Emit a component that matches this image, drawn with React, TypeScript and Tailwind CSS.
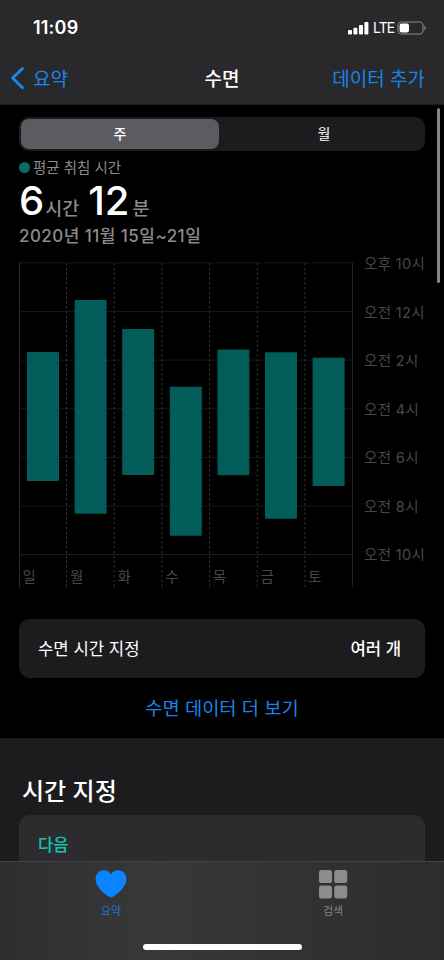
import React from "react";

const days = [
  { label: "일", top: 352, bottom: 481 },
  { label: "월", top: 300, bottom: 513.7 },
  { label: "화", top: 329, bottom: 475 },
  { label: "수", top: 386.8, bottom: 535.8 },
  { label: "목", top: 349.5, bottom: 475.3 },
  { label: "금", top: 352.3, bottom: 518.8 },
  { label: "토", top: 357.8, bottom: 486 },
];

const hours = ["오후 10시", "오전 12시", "오전 2시", "오전 4시", "오전 6시", "오전 8시", "오전 10시"];

const STEP = 47.6;
const CHART_TOP = 255;

function StatusBar() {
  return (
    <div className="flex h-[54px] items-start justify-between pl-[33px] pr-[17px] pt-[16px]">
      <span className="text-[18px] font-semibold leading-[24px] tracking-[0.2px]">11:09</span>
      <div className="flex h-[24px] items-center">
        <svg className="shrink-0" width="21" height="14" viewBox="0 0 21 14" fill="#fff">
          <rect x="0" y="9" width="4" height="4.6" rx="1" />
          <rect x="5.4" y="6.8" width="4" height="6.8" rx="1" />
          <rect x="11" y="4" width="4" height="9.6" rx="1" />
          <rect x="16.4" y="1" width="4" height="12.6" rx="1" />
        </svg>
        <span className="ml-[4px] w-[24px] text-[14px] font-normal leading-[24px] tracking-[-0.9px]">LTE</span>
        <svg className="shrink-0" width="30" height="14" viewBox="0 0 30 14">
          <rect x="1" y="1" width="25" height="12" rx="3.6" fill="none" stroke="#8b8b8d" strokeWidth="1.1" />
          <rect x="2.6" y="2.6" width="9.4" height="8.8" rx="1.8" fill="#fff" />
          <path d="M27.3 4.8 C29.2 5.6 29.2 8.4 27.3 9.2 Z" fill="#8b8b8d" />
        </svg>
      </div>
    </div>
  );
}

function NavBar() {
  return (
    <div className="grid h-[50px] grid-cols-3 items-start text-[19px] leading-[28px]">
      <div className="flex items-start pl-[10px] pt-[12px] text-[#1a84e8]">
        <svg className="shrink-0" width="15" height="24" viewBox="0 0 15 24" fill="none" stroke="#1a84e8" strokeWidth="3" strokeLinecap="round" strokeLinejoin="round">
          <path d="M12.4 2.6 L2.6 12 L12.4 21.6" />
        </svg>
        <span className="ml-[8px]">요약</span>
      </div>
      <div className="pt-[12px] text-center font-medium">수면</div>
      <div className="whitespace-nowrap pr-[19px] pt-[12px] text-right text-[#1a84e8]">데이터 추가</div>
    </div>
  );
}

function SleepChart() {
  const lines = [0, 1, 2, 3, 4, 5, 6];
  return (
    <div className="flex h-[340px] w-[425px]">
      <svg className="shrink-0" width="334" height="340" viewBox={`19 ${CHART_TOP} 334 340`}>
        {lines.map((i) => (
          <line key={i} x1="19.5" x2="352.5" y1={262.8 + i * 48.65} y2={262.8 + i * 48.65} stroke={i === 6 ? "#222223" : "#171718"} />
        ))}
        <line x1="19.5" x2="19.5" y1="262.5" y2="587" stroke="#2b2b2c" />
        <line x1="352.5" x2="352.5" y1="262.5" y2="587" stroke="#232324" />
        {days.slice(1).map((d, i) => (
          <line key={d.label} x1={66.5 + i * 47.7} x2={66.5 + i * 47.7} y1="263" y2="587" stroke="#363637" strokeDasharray="2.4 2.4" />
        ))}
        {days.map((d, i) => (
          <g key={d.label}>
            <rect x={27 + i * STEP} y={d.top} width="32" height={d.bottom - d.top} rx="0.8" fill="#025c59" />
            <text x={22.4 + i * STEP} y="582.3" fontSize="14.5" fill="#48484a">
              {d.label}
            </text>
          </g>
        ))}
      </svg>
      <div className="flex flex-col pl-[11px] text-[14.5px] tracking-[0.35px] text-[#48484a]">
        {hours.map((h) => (
          <span key={h} className="h-[48.65px] whitespace-nowrap leading-[17px]">
            {h}
          </span>
        ))}
      </div>
    </div>
  );
}

function TabBar() {
  return (
    <div className="flex h-[99px] flex-col border-t border-[#434345] bg-linear-to-r from-[#2e2e2f] via-[#38383a] via-35% to-[#2c2c2d]">
      <div className="grid grid-cols-2">
        <div className="flex flex-col items-center text-[#1a78d8]">
          <svg className="mt-[8px]" width="32" height="29" viewBox="0 0 32 29" fill="#0a84ff">
            <path d="M16 4.3 C14.3 1.6 11.8 0.2 8.9 0.2 C4.1 0.2 0.6 3.9 0.6 9.1 C0.6 16 6.6 22 13.2 26.3 C14.4 27 15.3 27.5 16 27.5 C16.7 27.5 17.6 27 18.8 26.3 C25.4 22 31.4 16 31.4 9.1 C31.4 3.9 27.9 0.2 23.1 0.2 C20.2 0.2 17.7 1.6 16 4.3 Z" />
          </svg>
          <span className="mt-[4px] text-[11px] leading-[16px]">요약</span>
        </div>
        <div className="flex flex-col items-center text-[#858587]">
          <svg className="mt-[8px]" width="30" height="29" viewBox="0 0 30 29" fill="#8c8c8e">
            <rect x="1" y="0" width="13" height="13" rx="2.6" />
            <rect x="16.2" y="0" width="13" height="13" rx="2.6" />
            <rect x="1" y="15.4" width="13" height="13" rx="2.6" />
            <rect x="16.2" y="15.4" width="13" height="13" rx="2.6" />
          </svg>
          <span className="mt-[4px] text-[11px] leading-[16px]">검색</span>
        </div>
      </div>
      <div className="mx-auto mt-[25px] h-[6px] w-[159px] rounded-full bg-white" />
    </div>
  );
}

export default function App() {
  return (
    <div className="relative flex h-[960px] w-[444px] flex-col overflow-hidden bg-black font-['Inter','Noto_Sans_CJK_KR',sans-serif] text-white">
      <header className="h-[105px] shrink-0 border-b border-[#1c1c1d] bg-[#29292b]">
        <StatusBar />
        <NavBar />
      </header>

      <section className="h-[633px] shrink-0 px-[19px] pt-[12px]">
        <div className="grid h-[34px] w-[406px] grid-cols-2 rounded-[10px] bg-[#1c1c1f] p-[2px] text-center text-[14px] leading-[30px]">
          <div className="mr-[3px] rounded-[8px] bg-[#5d5b61] font-medium">주</div>
          <div className="pl-[3px]">월</div>
        </div>
        <div className="mt-[6px] flex h-[20px] items-center text-[14.5px] text-[#8b8b8d]">
          <span className="h-[11px] w-[11px] rounded-full bg-[#0b6b67]" />
          <span className="ml-[3px] pt-px leading-[20px]">평균 취침 시간</span>
        </div>
        <div className="flex h-[46px] items-baseline whitespace-nowrap text-[18.5px] font-medium leading-[48px] text-[#8b8b8d]">
          <span className="text-[40px] text-white">6</span>
          <span className="ml-[1px]">시간</span>
          <span className="ml-[9px] text-[40px] text-white">12</span>
          <span className="ml-[3px]">분</span>
        </div>
        <div className="h-[32px] whitespace-nowrap text-[17px] font-medium leading-[27px] tracking-[0.45px] text-[#8b8b8d]">2020년 11월 15일~21일</div>
        <SleepChart />
        <div className="mt-[24px] flex h-[59px] w-[406px] items-center justify-between rounded-[11px] bg-[#1c1c1e] pl-[19px] pr-[24px] pt-[2px] text-[16.7px]">
          <span>수면 시간 지정</span>
          <span className="font-medium">여러 개</span>
        </div>
        <div className="mt-[17px] text-center text-[18.7px] leading-[28px] text-[#1a84e8]">수면 데이터 더 보기</div>
      </section>

      <section className="h-[123px] shrink-0 bg-[#1c1c1e] px-[19px] pt-[37px]">
        <h2 className="pl-[3px] text-[24px] font-medium leading-[34px]">시간 지정</h2>
        <div className="mt-[6px] h-[46px] w-[406px] rounded-t-[11px] bg-[#2c2c2e] pl-[19px] pt-[18px] text-[16.6px] font-medium leading-[24px] text-[#12c4b8]">다음</div>
      </section>

      <TabBar />
      <div className="absolute left-[437px] top-[108px] h-[175px] w-[3px] rounded-full bg-[#868686]" />
    </div>
  );
}
